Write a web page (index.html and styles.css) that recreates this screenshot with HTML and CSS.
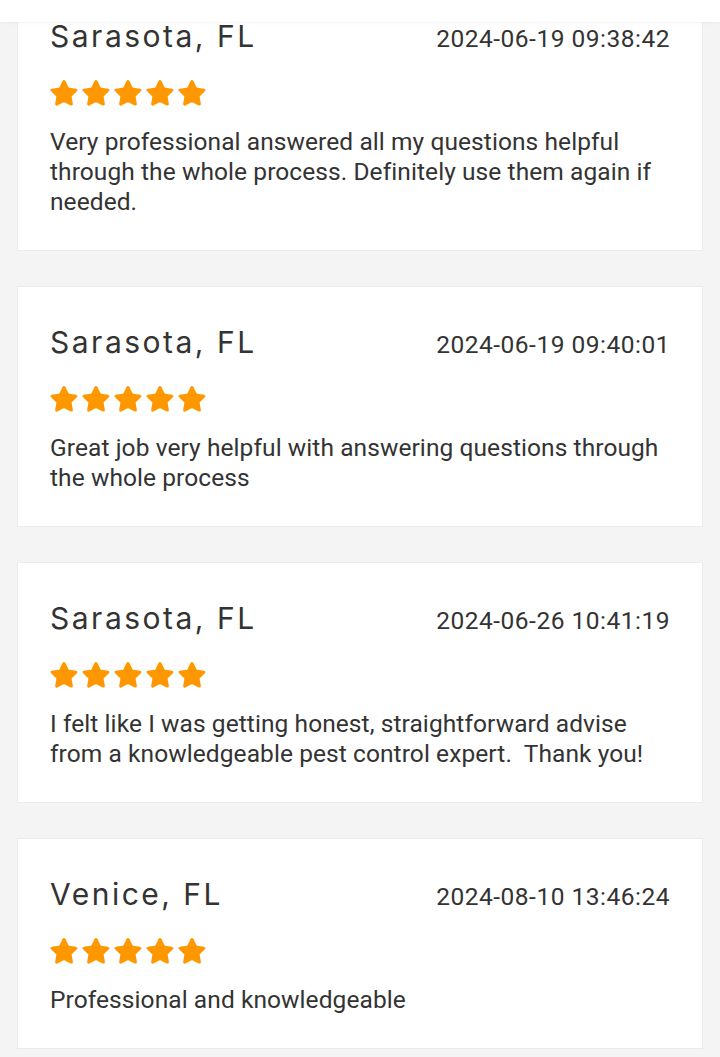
FILE: index.html
```html
<!DOCTYPE html>
<html>
<head>
<meta charset="utf-8">
<link rel="stylesheet" href="styles.css">
</head>
<body>
<header class="topbar"></header>
<main class="reviews">
  <article class="card">
    <div class="card-head">
      <h3 class="place">Sarasota, FL</h3>
      <span class="date">2024-06-19 09:38:42</span>
    </div>
    <div class="stars">
      <svg viewBox="0 0 28 28"><path d="M14 2.5L17.7 9.9L25.89 11.14L19.99 16.95L21.35 25.11L14 21.3L6.65 25.11L8.01 16.95L2.11 11.14L10.3 9.9Z"/></svg>
      <svg viewBox="0 0 28 28"><path d="M14 2.5L17.7 9.9L25.89 11.14L19.99 16.95L21.35 25.11L14 21.3L6.65 25.11L8.01 16.95L2.11 11.14L10.3 9.9Z"/></svg>
      <svg viewBox="0 0 28 28"><path d="M14 2.5L17.7 9.9L25.89 11.14L19.99 16.95L21.35 25.11L14 21.3L6.65 25.11L8.01 16.95L2.11 11.14L10.3 9.9Z"/></svg>
      <svg viewBox="0 0 28 28"><path d="M14 2.5L17.7 9.9L25.89 11.14L19.99 16.95L21.35 25.11L14 21.3L6.65 25.11L8.01 16.95L2.11 11.14L10.3 9.9Z"/></svg>
      <svg viewBox="0 0 28 28"><path d="M14 2.5L17.7 9.9L25.89 11.14L19.99 16.95L21.35 25.11L14 21.3L6.65 25.11L8.01 16.95L2.11 11.14L10.3 9.9Z"/></svg>
    </div>
    <p class="text">Very professional answered all my questions helpful through the whole process. Definitely use them again if needed.</p>
  </article>
  <article class="card">
    <div class="card-head">
      <h3 class="place">Sarasota, FL</h3>
      <span class="date">2024-06-19 09:40:01</span>
    </div>
    <div class="stars">
      <svg viewBox="0 0 28 28"><path d="M14 2.5L17.7 9.9L25.89 11.14L19.99 16.95L21.35 25.11L14 21.3L6.65 25.11L8.01 16.95L2.11 11.14L10.3 9.9Z"/></svg>
      <svg viewBox="0 0 28 28"><path d="M14 2.5L17.7 9.9L25.89 11.14L19.99 16.95L21.35 25.11L14 21.3L6.65 25.11L8.01 16.95L2.11 11.14L10.3 9.9Z"/></svg>
      <svg viewBox="0 0 28 28"><path d="M14 2.5L17.7 9.9L25.89 11.14L19.99 16.95L21.35 25.11L14 21.3L6.65 25.11L8.01 16.95L2.11 11.14L10.3 9.9Z"/></svg>
      <svg viewBox="0 0 28 28"><path d="M14 2.5L17.7 9.9L25.89 11.14L19.99 16.95L21.35 25.11L14 21.3L6.65 25.11L8.01 16.95L2.11 11.14L10.3 9.9Z"/></svg>
      <svg viewBox="0 0 28 28"><path d="M14 2.5L17.7 9.9L25.89 11.14L19.99 16.95L21.35 25.11L14 21.3L6.65 25.11L8.01 16.95L2.11 11.14L10.3 9.9Z"/></svg>
    </div>
    <p class="text">Great job very helpful with answering questions through the whole process</p>
  </article>
  <article class="card">
    <div class="card-head">
      <h3 class="place">Sarasota, FL</h3>
      <span class="date">2024-06-26 10:41:19</span>
    </div>
    <div class="stars">
      <svg viewBox="0 0 28 28"><path d="M14 2.5L17.7 9.9L25.89 11.14L19.99 16.95L21.35 25.11L14 21.3L6.65 25.11L8.01 16.95L2.11 11.14L10.3 9.9Z"/></svg>
      <svg viewBox="0 0 28 28"><path d="M14 2.5L17.7 9.9L25.89 11.14L19.99 16.95L21.35 25.11L14 21.3L6.65 25.11L8.01 16.95L2.11 11.14L10.3 9.9Z"/></svg>
      <svg viewBox="0 0 28 28"><path d="M14 2.5L17.7 9.9L25.89 11.14L19.99 16.95L21.35 25.11L14 21.3L6.65 25.11L8.01 16.95L2.11 11.14L10.3 9.9Z"/></svg>
      <svg viewBox="0 0 28 28"><path d="M14 2.5L17.7 9.9L25.89 11.14L19.99 16.95L21.35 25.11L14 21.3L6.65 25.11L8.01 16.95L2.11 11.14L10.3 9.9Z"/></svg>
      <svg viewBox="0 0 28 28"><path d="M14 2.5L17.7 9.9L25.89 11.14L19.99 16.95L21.35 25.11L14 21.3L6.65 25.11L8.01 16.95L2.11 11.14L10.3 9.9Z"/></svg>
    </div>
    <p class="text">I felt like I was getting honest, straightforward advise from a knowledgeable pest control expert.&nbsp; Thank you!</p>
  </article>
  <article class="card">
    <div class="card-head">
      <h3 class="place">Venice, FL</h3>
      <span class="date">2024-08-10 13:46:24</span>
    </div>
    <div class="stars">
      <svg viewBox="0 0 28 28"><path d="M14 2.5L17.7 9.9L25.89 11.14L19.99 16.95L21.35 25.11L14 21.3L6.65 25.11L8.01 16.95L2.11 11.14L10.3 9.9Z"/></svg>
      <svg viewBox="0 0 28 28"><path d="M14 2.5L17.7 9.9L25.89 11.14L19.99 16.95L21.35 25.11L14 21.3L6.65 25.11L8.01 16.95L2.11 11.14L10.3 9.9Z"/></svg>
      <svg viewBox="0 0 28 28"><path d="M14 2.5L17.7 9.9L25.89 11.14L19.99 16.95L21.35 25.11L14 21.3L6.65 25.11L8.01 16.95L2.11 11.14L10.3 9.9Z"/></svg>
      <svg viewBox="0 0 28 28"><path d="M14 2.5L17.7 9.9L25.89 11.14L19.99 16.95L21.35 25.11L14 21.3L6.65 25.11L8.01 16.95L2.11 11.14L10.3 9.9Z"/></svg>
      <svg viewBox="0 0 28 28"><path d="M14 2.5L17.7 9.9L25.89 11.14L19.99 16.95L21.35 25.11L14 21.3L6.65 25.11L8.01 16.95L2.11 11.14L10.3 9.9Z"/></svg>
    </div>
    <p class="text">Professional and knowledgeable</p>
  </article>
</main>
</body>
</html>
```

FILE: styles.css
```css
html, body {
  margin: 0;
  padding: 0;
}
body {
  background: #f4f4f4;
  font-family: Roboto, "Liberation Sans", sans-serif;
  color: #333;
  height: 1057px;
  overflow: hidden;
}
.topbar {
  position: fixed;
  top: 0;
  left: 0;
  right: 0;
  height: 22px;
  background: #fff;
  box-shadow: 0 1px 3px rgba(0, 0, 0, 0.05);
  z-index: 5;
}
.reviews {
  display: flex;
  flex-direction: column;
  gap: 35px;
  margin: -20px 17px 0;
}
.card {
  background: #fff;
  border: 1px solid #ececec;
  padding: 35px 32px 33px 32px;
}
.card-head {
  display: flex;
  justify-content: space-between;
  align-items: baseline;
}
.place {
  margin: 0;
  font-family: Inter, "Noto Sans", sans-serif;
  font-weight: 400;
  font-size: 30px;
  letter-spacing: 2.5px;
  line-height: 40px;
  color: #333;
}
.date {
  font-size: 24.5px;
  letter-spacing: 0.5px;
  color: #333;
}
.stars {
  display: flex;
  gap: 4px;
  margin-top: 23px;
  height: 28px;
}
.stars svg {
  width: 28px;
  height: 28px;
  fill: #ff9800;
  stroke: #ff9800;
  stroke-width: 3;
  stroke-linejoin: round;
}
.text {
  margin: 20px 0 0;
  font-size: 24.5px;
  letter-spacing: 0.08px;
  line-height: 30px;
  color: #333;
}
```
